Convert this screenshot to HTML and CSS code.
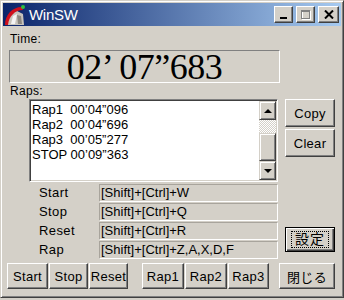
FILE: index.html
```html
<!DOCTYPE html>
<html lang="ja">

<head>
  <meta charset="UTF-8">
  <meta name="viewport" content="width=device-width, initial-scale=1.0">
  <title>WinSW</title>

  <link rel="stylesheet" href="styles.css">
</head>

<body>
  <div class="window">
    <!-- 타이틀 바 -->
    <div class="titlebar">
      <svg class="app-icon" width="22" height="22" viewBox="0 0 22 22">
        <path d="M2 21 L6 9 L13 7 L19 10 L20 21 Z" fill="#c8c4bc" />
        <path d="M7 20 L9 12 L13 10 L11 20 Z" fill="#f4f4f4" />
        <path d="M13 11 L17 12 L18 20 L14 20 Z" fill="#8c8880" />
        <path d="M1 21 C1 11 8 3 18 3 L19 6 C11 6 5 12 4 21 Z" fill="#d0101c" />
        <circle cx="19" cy="3" r="2" fill="#30c040" />
      </svg>
      <span class="title">WinSW</span>
      <div class="caption-buttons">
        <div class="cap-btn">
          <svg width="8" height="8" viewBox="0 0 8 8"><rect x="0" y="6" width="7" height="2" fill="#000" /></svg>
        </div>
        <div class="cap-btn disabled">
          <svg width="10" height="10" viewBox="0 0 10 10">
            <rect x="1.5" y="1.5" width="8" height="8" fill="none" stroke="#fff" />
            <rect x="0.5" y="0.5" width="8" height="8" fill="none" stroke="#808080" />
            <rect x="0" y="0" width="9" height="2" fill="#808080" />
          </svg>
        </div>
        <div class="cap-btn close">
          <svg width="10" height="9" viewBox="0 0 10 9">
            <path d="M1 0.5 L9 8.5 M9 0.5 L1 8.5" stroke="#000" stroke-width="2" />
          </svg>
        </div>
      </div>
    </div>

    <div class="content">
      <div class="label time-label">Time:</div>
      <div class="time-box">02’ 07”683</div>

      <div class="label raps-label">Raps:</div>
      <div class="raps-row">
        <div class="listbox">
          <div class="list-items">
            <div>Rap1&nbsp; 00’04”096</div>
            <div>Rap2&nbsp; 00’04”696</div>
            <div>Rap3&nbsp; 00’05”277</div>
            <div>STOP 00’09”363</div>
          </div>
          <div class="scrollbar">
            <div class="sb-btn"><span class="arrow-up"></span></div>
            <div class="sb-track"></div>
            <div class="sb-thumb"></div>
            <div class="sb-btn"><span class="arrow-down"></span></div>
          </div>
        </div>
        <div class="side-buttons">
          <button class="btn side">Copy</button>
          <button class="btn side">Clear</button>
        </div>
      </div>

      <div class="hotkey-row">
        <div class="hotkeys">
          <span class="hk-label">Start</span>
          <span class="hk-field">[Shift]+[Ctrl]+W</span>
          <span class="hk-label">Stop</span>
          <span class="hk-field">[Shift]+[Ctrl]+Q</span>
          <span class="hk-label">Reset</span>
          <span class="hk-field">[Shift]+[Ctrl]+R</span>
          <span class="hk-label">Rap</span>
          <span class="hk-field">[Shift]+[Ctrl]+Z,A,X,D,F</span>
        </div>
        <button class="btn default"><span class="focus">設定</span></button>
      </div>

      <div class="bottom-row">
        <div class="group">
          <button class="btn b-start">Start</button>
          <button class="btn b-stop">Stop</button>
          <button class="btn b-reset">Reset</button>
        </div>
        <div class="group raps">
          <button class="btn b-rap">Rap1</button>
          <button class="btn b-rap">Rap2</button>
          <button class="btn b-rap3">Rap3</button>
        </div>
        <button class="btn b-close">閉じる</button>
      </div>
    </div>
  </div>
</body>

</html>
```

FILE: styles.css
```css
html,
body {
  margin: 0;
  padding: 0;
  background-color: #d4d0c8;
}

body {
  font-family: "Liberation Sans", "Noto Sans CJK JP", sans-serif;
  font-size: 13px;
  color: #000;
}

/* 윈도우 프레임 (클래식 3D 테두리) */
.window {
  width: 344px;
  height: 298px;
  box-sizing: border-box;
  border: 1px solid;
  border-color: #d4d0c8 #404040 #404040 #d4d0c8;
  box-shadow: inset 1px 1px #fff, inset -1px -1px #808080;
  padding: 2px;
  background-color: #d4d0c8;
}

.titlebar {
  height: 23px;
  display: flex;
  align-items: center;
  background: linear-gradient(to right, #0a246a, #a6caf0);
  color: #fff;
}

.app-icon {
  margin-left: 1px;
  flex: none;
}

.title {
  margin-left: 3px;
  font-size: 15px;
  letter-spacing: -0.3px;
}

.caption-buttons {
  margin-left: auto;
  margin-right: 2px;
  display: flex;
  gap: 3px;
}

.cap-btn {
  width: 19px;
  height: 17px;
  box-sizing: border-box;
  display: flex;
  align-items: center;
  justify-content: center;
  background-color: #d4d0c8;
  border: 1px solid;
  border-color: #fff #404040 #404040 #fff;
  box-shadow: inset -1px -1px #808080;
}

.cap-btn.close {
  width: 21px;
}

.content {
  padding: 0 6px;
}

.label {
  height: 14px;
  line-height: 14px;
  font-size: 12px;
  letter-spacing: 0.3px;
}

.time-label {
  margin-top: 6px;
  margin-left: 1px;
}

.time-box {
  margin-top: 4px;
  width: 271px;
  height: 33px;
  box-sizing: border-box;
  border: 1px solid;
  border-color: #808080 #fff #fff #808080;
  text-align: center;
  font-family: "Liberation Serif", serif;
  font-size: 36px;
  line-height: 33px;
  letter-spacing: -0.5px;
}

.raps-label {
  margin-top: 1px;
  margin-left: 1px;
}

.raps-row {
  display: flex;
  margin-top: 1px;
}

.listbox {
  margin-left: 20px;
  width: 249px;
  height: 83px;
  box-sizing: border-box;
  border: 1px solid;
  border-color: #808080 #fff #fff #808080;
  box-shadow: inset 1px 1px #404040, inset -1px -1px #d4d0c8;
  background-color: #fff;
  display: flex;
  padding: 1px;
}

.list-items {
  flex: 1;
  padding: 1px 0 0 1px;
  line-height: 15px;
}

.scrollbar {
  width: 17px;
  display: flex;
  flex-direction: column;
}

.sb-btn {
  height: 19px;
  box-sizing: border-box;
  display: flex;
  align-items: center;
  justify-content: center;
  background-color: #d4d0c8;
  border: 1px solid;
  border-color: #d4d0c8 #404040 #404040 #d4d0c8;
  box-shadow: inset 1px 1px #fff, inset -1px -1px #808080;
}

.arrow-up {
  border-left: 4px solid transparent;
  border-right: 4px solid transparent;
  border-bottom: 4px solid #000;
}

.arrow-down {
  border-left: 4px solid transparent;
  border-right: 4px solid transparent;
  border-top: 4px solid #000;
}

.sb-track {
  height: 13px;
  background-color: #eae8e4;
  background-image: repeating-conic-gradient(#fff 0 25%, #d4d0c8 0 50%);
  background-size: 2px 2px;
}

.sb-thumb {
  flex: 1;
  box-sizing: border-box;
  background-color: #d4d0c8;
  border: 1px solid;
  border-color: #d4d0c8 #404040 #404040 #d4d0c8;
  box-shadow: inset 1px 1px #fff, inset -1px -1px #808080;
}

.side-buttons {
  margin-left: 7px;
  display: flex;
  flex-direction: column;
  gap: 2px;
}

/* 클래식 버튼 */
.btn {
  font-family: "Liberation Sans", "Noto Sans CJK JP", sans-serif;
  font-size: 13px;
  color: #000;
  margin: 0;
  padding: 0;
  box-sizing: border-box;
  background-color: #d4d0c8;
  border: 1px solid;
  border-color: #fff #404040 #404040 #fff;
  box-shadow: inset -1px -1px #808080;
  letter-spacing: 0.3px;
}

.btn.side {
  width: 50px;
  height: 28px;
}

.hotkey-row {
  display: flex;
  margin-top: 2px;
}

.hotkeys {
  display: grid;
  grid-template-columns: 60px 179px;
  grid-auto-rows: 18px;
  row-gap: 1px;
  margin-left: 30px;
}

.hk-label {
  line-height: 18px;
  letter-spacing: 0.4px;
}

.hk-field {
  box-sizing: border-box;
  border: 1px solid;
  border-color: #a8a49c #fff #fff #a8a49c;
  line-height: 16px;
  padding-left: 1px;
  white-space: nowrap;
  overflow: hidden;
}

.btn.default {
  width: 50px;
  height: 25px;
  margin-left: 7px;
  margin-top: 43px;
  border: 1px solid #000;
  box-shadow: inset 1px 1px #fff, inset -1px -1px #404040, inset -2px -2px #808080;
  display: flex;
  align-items: center;
  justify-content: center;
}

.focus {
  border: 1px dotted #000;
  padding: 0 3px;
  line-height: 15px;
  font-size: 14px;
  letter-spacing: 1px;
}

.bottom-row {
  display: flex;
  margin-top: 4px;
  margin-left: -2px;
  height: 26px;
}

.group {
  display: flex;
  gap: 1px;
}

.group .btn {
  height: 26px;
}

.b-start {
  width: 41px;
}

.b-stop,
.b-reset {
  width: 39px;
}

.group.raps {
  margin-left: 14px;
}

.b-rap {
  width: 42px;
}

.b-rap3 {
  width: 41px;
}

.b-close {
  margin-left: 10px;
  width: 56px;
  height: 26px;
}
```
